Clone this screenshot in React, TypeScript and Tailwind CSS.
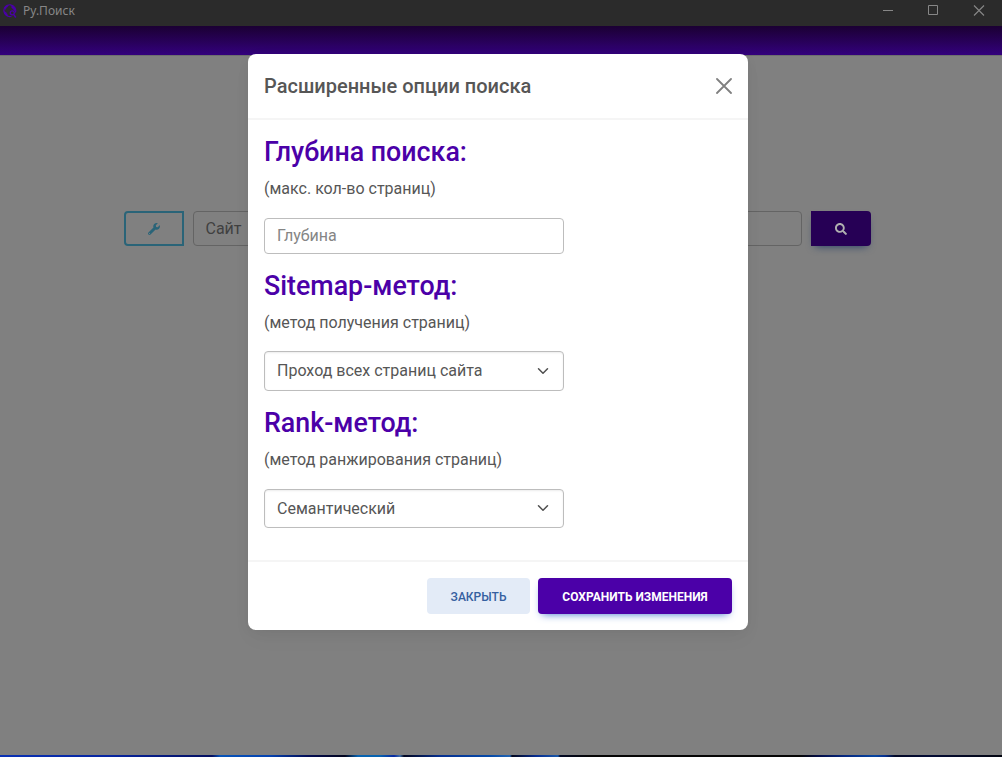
import { FaSearch, FaWrench } from "react-icons/fa";

function TitleBar() {
  return (
    <div className="flex h-[26px] shrink-0 items-start justify-between bg-[#2b2b2b] text-[#878787]">
      <div className="flex h-[21px] items-center gap-[6px] pl-[3px]">
        <svg width="14" height="14" viewBox="0 0 14 14" fill="none" stroke="#4b00a8">
          <path d="M8.5 12.3A5.9 5.9 0 1 1 12.4 8.5" strokeWidth="1.2" />
          <path d="M1.2 3.6 3.4 1.6 5.4 1l-.6 1.6L3 4 2.4 5.6zM8.4 1.2l3 1.8 1.2 3.2-1.3.8-1.2-2.2L8.8 4z" fill="#4b00a8" strokeWidth=".4" />
          <path d="m1 7.5 2 .8 1.2 2 .6 1.8L2.4 10.8z" fill="#4b00a8" strokeWidth=".4" />
          <circle cx="9.3" cy="8.8" r="2" strokeWidth="1.3" />
          <path d="m10.8 10.6 2 2.9" strokeWidth="1.5" />
        </svg>
        <span className="font-['Noto_Sans',sans-serif] text-[12px] leading-[20px]">Ру.Поиск</span>
      </div>
      <svg width="102" height="11" viewBox="0 0 102 11" fill="none" stroke="#878787" className="mt-[5px] mr-[17px]">
        <path d="M0 5.5h10" />
        <path d="M45.5.5h9v9h-9z" />
        <path d="m91 .5 10 10m0-10-10 10" strokeWidth="1.1" />
      </svg>
    </div>
  );
}

function Chevron() {
  return (
    <svg width="12" height="12" viewBox="0 0 16 16" fill="none" stroke="#4f4f4f" strokeWidth="2" strokeLinecap="round" strokeLinejoin="round">
      <path d="m2 5 6 6 6-6" />
    </svg>
  );
}

function Section({ title, hint }: { title: string; hint: string }) {
  return (
    <>
      <h3 className="h-[32px] text-[26.8px] leading-[32px] font-medium whitespace-nowrap text-[#4b00a8]">{title}</h3>
      <p className="mt-2 text-[16px] leading-[26px]">{hint}</p>
    </>
  );
}

function Modal() {
  return (
    <div className="absolute top-[54px] left-[248px] flex h-[576px] w-[500px] flex-col rounded-[8px] bg-white text-[#565656] shadow-[0_2px_15px_-3px_rgba(0,0,0,0.07),0_10px_20px_-2px_rgba(0,0,0,0.04)]">
      <div className="flex h-[66px] items-center justify-between border-b-2 border-[#f5f5f5] px-4">
        <h5 className="text-[20px] leading-8 font-medium">Расширенные опции поиска</h5>
        <svg width="16" height="16" viewBox="0 0 16 16" stroke="#808080" strokeWidth="1.8" strokeLinecap="round">
          <path d="m1 1 14 14M15 1 1 15" />
        </svg>
      </div>
      <div className="flex h-[440px] flex-col px-4 pt-4">
        <Section title="Глубина поиска:" hint="(макс. кол-во страниц)" />
        <input placeholder="Глубина" className="mt-4 mb-4 h-[36px] w-[300px] rounded-[4px] border border-[#bdbdbd] px-3 pb-px text-[16px] outline-none placeholder:text-[#858585]" />
        <Section title="Sitemap-метод:" hint="(метод получения страниц)" />
        <div className="mt-[15px] mb-4 flex h-[40px] w-[300px] items-center justify-between rounded-[4px] border border-[#bdbdbd] pr-[14px] pb-px pl-3 text-[16px] shadow-[inset_0_1px_2px_rgba(0,0,0,0.075)]">
          Проход всех страниц сайта
          <Chevron />
        </div>
        <Section title="Rank-метод:" hint="(метод ранжирования страниц)" />
        <div className="mt-4 flex h-[39px] w-[300px] items-center justify-between rounded-[4px] border border-[#bdbdbd] pr-[14px] pb-px pl-3 text-[16px] shadow-[inset_0_1px_2px_rgba(0,0,0,0.075)]">
          <span className="pt-px">Семантический</span>
          <Chevron />
        </div>
      </div>
      <div className="flex h-[70px] items-center justify-end gap-2 border-t-2 border-[#f5f5f5] px-4">
        <button className="h-[36px] w-[103px] rounded-[4px] bg-[#e3ebf7] pt-[2px] text-[12px] font-medium text-[#3560a0]">ЗАКРЫТЬ</button>
        <button className="h-[36px] w-[194px] rounded-[4px] bg-[#4b00a8] pt-[2px] text-[12px] font-bold whitespace-nowrap text-white shadow-[0_4px_9px_-4px_#3b71ca]">СОХРАНИТЬ ИЗМЕНЕНИЯ</button>
      </div>
    </div>
  );
}

export default function App() {
  return (
    <div className="relative flex h-[757px] w-[1002px] flex-col overflow-hidden bg-[#808080] font-[Roboto,sans-serif]">
      <TitleBar />
      <div className="h-[30px] shrink-0 border-b border-[#6e6e6e] bg-linear-to-b from-[#1b0033] to-[#33007d] bg-clip-padding" />
      <main className="flex flex-1 items-start pt-[155px] pl-[124px]">
        <button className="flex h-[35px] w-[60px] items-center justify-center rounded-l-[4px] border-2 border-[#2a6478] text-[#2a6478]">
          <FaWrench size={12} />
        </button>
        <div className="ml-[9px] h-[35px] w-[609px] rounded-[4px] border border-[#646464] px-[11.5px] text-[16px] leading-[33px] text-[#404040]">Сайт</div>
        <button className="ml-[9px] flex h-[35px] w-[60px] items-center justify-center rounded-r-[4px] bg-[#260055] text-[#b0b0b0] shadow-[0_4px_9px_-4px_#1e3965]">
          <FaSearch size={12} />
        </button>
      </main>
      <div className="h-[2px] shrink-0 bg-[linear-gradient(90deg,#0a31b4_0px,#0725a0_110px,#040f60_212px,#0754b8_220px,#0542b0_270px,#030c55_308px,#02041c_345px,#0863b0_358px,#0863b0_380px,#0828a0_394px,#4070a8_400px,#020620_404px,#062f90_440px,#064aa8_490px,#2464b0_510px,#02061c_512px,#062c90_536px,#1b58a8_558px,#020825_560px,#050505_590px,#050505_800px,#030c45_818px,#062880_845px,#0745a0_875px,#063090_885px,#020825_895px,#020b35_930px,#020510_1002px)]" />
      <Modal />
    </div>
  );
}
